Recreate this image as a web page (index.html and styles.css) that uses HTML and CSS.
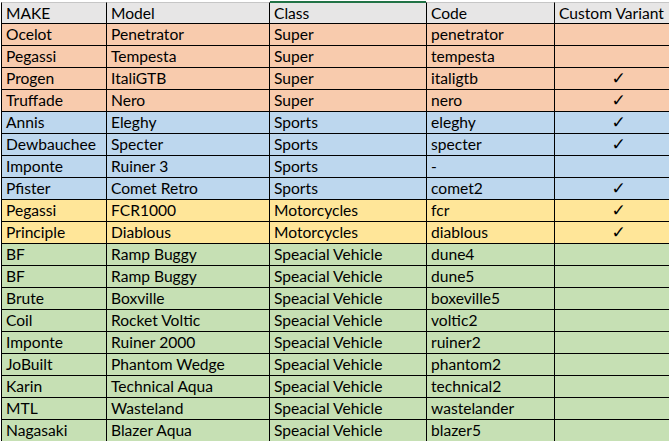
FILE: index.html
```html
<!DOCTYPE html>
<html>
<head>
<meta charset="utf-8">
<link rel="stylesheet" href="styles.css">
</head>
<body>
<div class="sheet">
  <div class="row head">
    <div class="c">MAKE</div><div class="c">Model</div><div class="c sel">Class</div><div class="c">Code</div><div class="c">Custom Variant</div>
  </div>
  <div class="row super"><div class="c">Ocelot</div><div class="c">Penetrator</div><div class="c">Super</div><div class="c">penetrator</div><div class="c chk"></div></div>
  <div class="row super"><div class="c">Pegassi</div><div class="c">Tempesta</div><div class="c">Super</div><div class="c">tempesta</div><div class="c chk"></div></div>
  <div class="row super"><div class="c">Progen</div><div class="c">ItaliGTB</div><div class="c">Super</div><div class="c">italigtb</div><div class="c chk">✓</div></div>
  <div class="row super"><div class="c">Truffade</div><div class="c">Nero</div><div class="c">Super</div><div class="c">nero</div><div class="c chk">✓</div></div>
  <div class="row sports"><div class="c">Annis</div><div class="c">Eleghy</div><div class="c">Sports</div><div class="c">eleghy</div><div class="c chk">✓</div></div>
  <div class="row sports"><div class="c">Dewbauchee</div><div class="c">Specter</div><div class="c">Sports</div><div class="c">specter</div><div class="c chk">✓</div></div>
  <div class="row sports"><div class="c">Imponte</div><div class="c">Ruiner 3</div><div class="c">Sports</div><div class="c">-</div><div class="c chk"></div></div>
  <div class="row sports"><div class="c">Pfister</div><div class="c">Comet Retro</div><div class="c">Sports</div><div class="c">comet2</div><div class="c chk">✓</div></div>
  <div class="row moto"><div class="c">Pegassi</div><div class="c">FCR1000</div><div class="c">Motorcycles</div><div class="c">fcr</div><div class="c chk">✓</div></div>
  <div class="row moto"><div class="c">Principle</div><div class="c">Diablous</div><div class="c">Motorcycles</div><div class="c">diablous</div><div class="c chk">✓</div></div>
  <div class="row special"><div class="c">BF</div><div class="c">Ramp Buggy</div><div class="c">Speacial Vehicle</div><div class="c">dune4</div><div class="c chk"></div></div>
  <div class="row special"><div class="c">BF</div><div class="c">Ramp Buggy</div><div class="c">Speacial Vehicle</div><div class="c">dune5</div><div class="c chk"></div></div>
  <div class="row special"><div class="c">Brute</div><div class="c">Boxville</div><div class="c">Speacial Vehicle</div><div class="c">boxeville5</div><div class="c chk"></div></div>
  <div class="row special"><div class="c">Coil</div><div class="c">Rocket Voltic</div><div class="c">Speacial Vehicle</div><div class="c">voltic2</div><div class="c chk"></div></div>
  <div class="row special"><div class="c">Imponte</div><div class="c">Ruiner 2000</div><div class="c">Speacial Vehicle</div><div class="c">ruiner2</div><div class="c chk"></div></div>
  <div class="row special"><div class="c">JoBuilt</div><div class="c">Phantom Wedge</div><div class="c">Speacial Vehicle</div><div class="c">phantom2</div><div class="c chk"></div></div>
  <div class="row special"><div class="c">Karin</div><div class="c">Technical Aqua</div><div class="c">Speacial Vehicle</div><div class="c">technical2</div><div class="c chk"></div></div>
  <div class="row special"><div class="c">MTL</div><div class="c">Wasteland</div><div class="c">Speacial Vehicle</div><div class="c">wastelander</div><div class="c chk"></div></div>
  <div class="row special"><div class="c">Nagasaki</div><div class="c">Blazer Aqua</div><div class="c">Speacial Vehicle</div><div class="c">blazer5</div><div class="c chk"></div></div>
</div>
</body>
</html>
```
FILE: styles.css
```css
html, body {
  margin: 0;
  padding: 0;
  background: #ffffff;
  overflow: hidden;
}
body {
  font-family: Lato, "Liberation Sans", sans-serif;
  font-size: 15.6px;
  color: #000;
}
.sheet {
  padding-top: 2px;
  padding-left: 1px;
  width: 669px;
  height: 441px;
  box-sizing: border-box;
  overflow: hidden;
}
.row {
  display: grid;
  grid-template-columns: 105px 163px 157px 128px 128px;
}
.c {
  box-sizing: border-box;
  height: 22px;
  border-left: 1px solid #000;
  border-bottom: 1px solid #000;
  padding: 0 0 0 4px;
  line-height: 21px;
  white-space: nowrap;
  overflow: hidden;
}
.head .c {
  background: #e7e6e6;
  border-top: 1px solid #c6c6c6;
  line-height: 20px;
  position: relative;
  overflow: visible;
}
.head .c.sel::before {
  content: "";
  position: absolute;
  left: 0;
  right: 0;
  top: -2px;
  height: 2px;
  background: #217346;
}
.super .c { background: #f8cbad; }
.sports .c { background: #bdd7ee; }
.moto .c { background: #ffe699; }
.special .c { background: #c6e0b4; }
.chk {
  text-align: center;
  padding-left: 0;
  font-family: "DejaVu Sans", sans-serif;
  font-size: 17px;
}
```
